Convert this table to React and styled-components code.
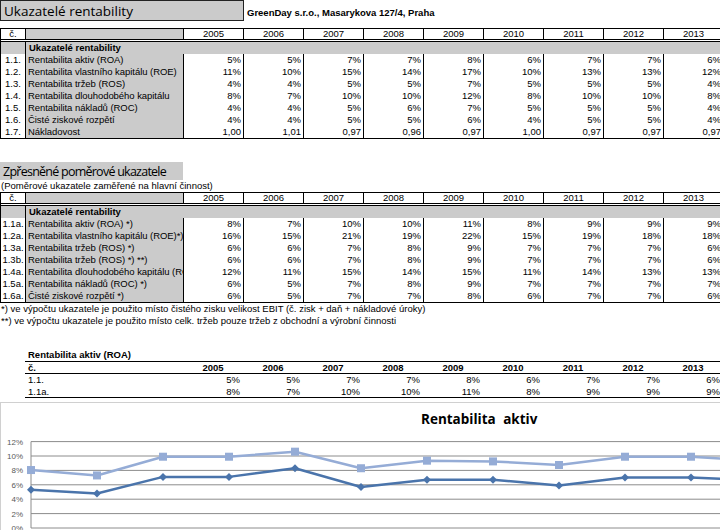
import React from 'react';
import styled, { createGlobalStyle } from 'styled-components';

const GlobalStyle = createGlobalStyle`
  html, body {
    margin: 0;
    padding: 0;
    background: #fff;
  }
  body {
    font-family: "Liberation Sans", Arial, sans-serif;
    color: #000;
  }
`;

const YEARS = [2005, 2006, 2007, 2008, 2009, 2010, 2011, 2012, 2013];
const GREY = '#cbcbcb';

const pct = (arr) => arr.map((v) => `${v}%`);

const basic = [
    { no: '1.1.', label: 'Rentabilita aktiv (ROA)', values: pct([5, 5, 7, 7, 8, 6, 7, 7, 6]) },
    { no: '1.2.', label: 'Rentabilita vlastního kapitálu (ROE)', values: pct([11, 10, 15, 14, 17, 10, 13, 13, 12]) },
    { no: '1.3.', label: 'Rentabilita tržeb (ROS)', values: pct([4, 4, 5, 5, 7, 5, 5, 5, 4]) },
    { no: '1.4.', label: 'Rentabilita dlouhodobého kapitálu', values: pct([8, 7, 10, 10, 12, 8, 10, 10, 8]) },
    { no: '1.5.', label: 'Rentabilita nákladů (ROC)', values: pct([4, 4, 5, 6, 7, 5, 5, 5, 4]) },
    { no: '1.6.', label: 'Čisté ziskové rozpětí', values: pct([4, 4, 5, 5, 6, 4, 5, 5, 4]) },
    { no: '1.7.', label: 'Nákladovost', values: ['1,00', '1,01', '0,97', '0,96', '0,97', '1,00', '0,97', '0,97', '0,97'] },
];

const refined = [
    { no: '1.1a.', label: 'Rentabilita aktiv (ROA) *)', values: pct([8, 7, 10, 10, 11, 8, 9, 9, 9]) },
    { no: '1.2a.', label: 'Rentabilita vlastního kapitálu (ROE)*)', values: pct([16, 15, 21, 19, 22, 15, 19, 18, 18]) },
    { no: '1.3a.', label: 'Rentabilita tržeb (ROS) *)', values: pct([6, 6, 7, 8, 9, 7, 7, 7, 6]) },
    { no: '1.3b.', label: 'Rentabilita tržeb (ROS) *) **)', values: pct([6, 6, 7, 8, 9, 7, 7, 7, 6]) },
    { no: '1.4a.', label: 'Rentabilita dlouhodobého kapitálu (ROCE) *)', values: pct([12, 11, 15, 14, 15, 11, 14, 13, 13]) },
    { no: '1.5a.', label: 'Rentabilita nákladů (ROC) *)', values: pct([6, 5, 7, 8, 9, 7, 7, 7, 7]) },
    { no: '1.6a.', label: 'Čisté ziskové rozpětí *)', values: pct([6, 5, 7, 7, 8, 6, 7, 7, 6]) },
];

const roa = [
    { no: '1.1.', values: pct([5, 5, 7, 7, 8, 6, 7, 7, 6]) },
    { no: '1.1a.', values: pct([8, 7, 10, 10, 11, 8, 9, 9, 9]) },
];

// chart series read off the plot (more years than the table)
const seriesRoa = [5.3, 4.8, 7.1, 7.1, 8.3, 5.7, 6.7, 6.7, 5.9, 7.0, 7.0, 6.6];
const seriesRoaA = [8.05, 7.3, 9.9, 9.9, 10.6, 8.3, 9.35, 9.25, 8.75, 9.9, 9.9, 9.3];

const Sheet = styled.div`
    width: 720px;
    height: 530px;
    overflow: hidden;
    font-size: 9.5px;
`;

const TopBar = styled.div`
    display: flex;
    align-items: flex-end;
    gap: 3px;
    height: 21px;
`;

const BigTitle = styled.div`
    box-sizing: border-box;
    width: 244px;
    height: 21px;
    padding: 1px 3px 0;
    line-height: 18px;
    background: ${GREY};
    border: 1px solid #222;
    font-family: "Open Sans", "Noto Sans", sans-serif;
    font-size: 13.5px;
    white-space: nowrap;
`;

const Company = styled.div`
    font-weight: bold;
    line-height: 12px;
    padding-bottom: 2px;
    white-space: nowrap;
`;

const Table = styled.div`
    width: 723px;
    margin-top: ${(p) => p.$top || 0}px;
    border: 1px solid #000;
    border-right: none;
`;

const Row = styled.div`
    display: grid;
    grid-template-columns: 25px 158px repeat(9, 60px);
    box-sizing: border-box;
    height: ${(p) => (p.$head ? 13 : 12)}px;
    border-bottom: ${(p) => (p.$head ? '3px double #000' : 'none')};
    background: ${(p) => (p.$section ? GREY : 'transparent')};
`;

const Cell = styled.div`
    box-sizing: border-box;
    line-height: ${(p) => (p.$short ? 10 : 12)}px;
    padding: 0 2px;
    border-right: 1px solid #000;
    overflow: hidden;
    white-space: nowrap;
`;

const NoCell = styled(Cell)`
    text-align: center;
    padding: 0;
`;

const LabelCell = styled(Cell)`
    background: ${GREY};
    padding-left: 2px;
    padding-right: 0;
    letter-spacing: -0.05px;
    text-overflow: clip;
`;

const YearCell = styled(Cell)`
    text-align: center;
`;

const ValueCell = styled(Cell)`
    text-align: right;
`;

const SectionLabel = styled.div`
    grid-column: 2 / -1;
    padding-left: 3px;
    line-height: 12px;
    font-weight: bold;
`;

const SubTitle = styled.div`
    box-sizing: border-box;
    width: 183px;
    height: 18px;
    margin-top: 23px;
    padding: 1px 3px 0;
    line-height: 18px;
    background: ${GREY};
    font-family: "Open Sans", "Noto Sans", sans-serif;
    font-size: 12.5px;
    letter-spacing: -0.75px;
    white-space: nowrap;
`;

const Line = styled.div`
    height: 12px;
    line-height: 12px;
    padding-left: ${(p) => p.$indent || 1}px;
    font-weight: ${(p) => (p.$bold ? 'bold' : 'normal')};
    white-space: nowrap;
`;

const RoaBlock = styled.div`
    margin: 22px 0 0 25px;
    width: 698px;
`;

const RoaRow = styled.div`
    display: grid;
    grid-template-columns: 158px repeat(9, 60px);
    height: ${(p) => (p.$head ? 13 : 12)}px;
    box-sizing: border-box;
    border-top: ${(p) => (p.$head ? '1px solid #000' : 'none')};
    border-bottom: ${(p) => (p.$head || p.$last ? '1px solid #000' : 'none')};
    font-weight: ${(p) => (p.$head ? 'bold' : 'normal')};
    line-height: ${(p) => (p.$head ? 11 : 12)}px;
`;

const RoaCell = styled.div`
    padding: 0 3px;
    text-align: ${(p) => p.$align || 'left'};
    white-space: nowrap;
`;

const ChartBox = styled.div`
    margin-top: 4px;
    width: 760px;
    height: 160px;
    border: 1px solid #d0d0d0;
`;

const ChartTitle = styled.div`
    margin-top: 8px;
    padding-left: 420px;
    height: 16px;
    line-height: 16px;
    font-family: "Open Sans", "Noto Sans", sans-serif;
    font-size: 13.5px;
    font-weight: bold;
    word-spacing: 4px;
    color: #000;
`;

const Plot = styled.svg`
    display: block;
    overflow: visible;
`;

const YearHeader = () => (
    <Row $head>
        <NoCell $short>č.</NoCell>
        <LabelCell $short />
        {YEARS.map((y) => (
            <YearCell key={y} $short>
                {y}
            </YearCell>
        ))}
    </Row>
);

const RatioTable = ({ rows, top }) => (
    <Table $top={top}>
        <YearHeader />
        <Row $section>
            <NoCell />
            <SectionLabel>Ukazatelé rentability</SectionLabel>
        </Row>
        {rows.map((r) => (
            <Row key={r.no}>
                <NoCell>{r.no}</NoCell>
                <LabelCell>{r.label}</LabelCell>
                {r.values.map((v, i) => (
                    <ValueCell key={i}>{v}</ValueCell>
                ))}
            </Row>
        ))}
    </Table>
);

const X0 = 30;
const STEP = 66;
const yOf = (v) => 101 - v * 7.2;

const RoaChart = () => {
    const pts1 = seriesRoa.map((v, i) => [X0 + i * STEP, yOf(v)]);
    const pts2 = seriesRoaA.map((v, i) => [X0 + i * STEP, yOf(v)]);
    return (
        <ChartBox>
            <ChartTitle>Rentabilita aktiv</ChartTitle>
            <Plot width="720" height="103" viewBox="0 0 720 103">
                {[0, 2, 4, 6, 8, 10, 12].map((g) => (
                    <g key={g}>
                        <line x1={X0} x2="760" y1={yOf(g)} y2={yOf(g)} stroke="#8c8c8c" strokeWidth="1" />
                        <text
                            x="22"
                            y={yOf(g) + 3}
                            textAnchor="end"
                            fontSize="8"
                            fill="#595959"
                            fontFamily="Liberation Sans, Arial, sans-serif"
                        >
                            {g}%
                        </text>
                    </g>
                ))}
                <line x1={X0} x2={X0} y1={yOf(12)} y2={yOf(0)} stroke="#8c8c8c" strokeWidth="1" />
                <polyline
                    points={pts2.map((p) => p.join(',')).join(' ')}
                    fill="none"
                    stroke="#95acd6"
                    strokeWidth="2.5"
                    strokeLinejoin="round"
                />
                {pts2.map(([x, y], i) => (
                    <rect key={i} x={x - 4} y={y - 4} width="8" height="8" fill="#95acd6" />
                ))}
                <polyline
                    points={pts1.map((p) => p.join(',')).join(' ')}
                    fill="none"
                    stroke="#4a74ab"
                    strokeWidth="2.5"
                    strokeLinejoin="round"
                />
                {pts1.map(([x, y], i) => (
                    <polygon key={i} points={`${x},${y - 4} ${x + 4},${y} ${x},${y + 4} ${x - 4},${y}`} fill="#4a74ab" />
                ))}
            </Plot>
        </ChartBox>
    );
};

const App = () => (
    <Sheet>
        <GlobalStyle />
        <TopBar>
            <BigTitle>Ukazatelé rentability</BigTitle>
            <Company>GreenDay s.r.o., Masarykova 127/4, Praha</Company>
        </TopBar>

        <RatioTable rows={basic} top={7} />

        <SubTitle>Zpřesněné poměrové ukazatele</SubTitle>
        <Line $indent={1}>(Poměrové ukazatele zaměřené na hlavní činnost)</Line>
        <RatioTable rows={refined} top={0} />

        <Line>*) ve výpočtu ukazatele je použito místo čistého zisku velikost EBIT (č. zisk + daň + nákladové úroky)</Line>
        <Line>**) ve výpočtu ukazatele je použito místo celk. tržeb pouze tržeb z obchodní a výrobní činnosti</Line>

        <RoaBlock>
            <Line $bold $indent={3}>Rentabilita aktiv (ROA)</Line>
            <RoaRow $head>
                <RoaCell>č.</RoaCell>
                {YEARS.map((y) => (
                    <RoaCell key={y} $align="center">
                        {y}
                    </RoaCell>
                ))}
            </RoaRow>
            {roa.map((r, idx) => (
                <RoaRow key={r.no} $last={idx === roa.length - 1}>
                    <RoaCell>{r.no}</RoaCell>
                    {r.values.map((v, i) => (
                        <RoaCell key={i} $align="right">
                            {v}
                        </RoaCell>
                    ))}
                </RoaRow>
            ))}
        </RoaBlock>

        <RoaChart />
    </Sheet>
);

export default App;
